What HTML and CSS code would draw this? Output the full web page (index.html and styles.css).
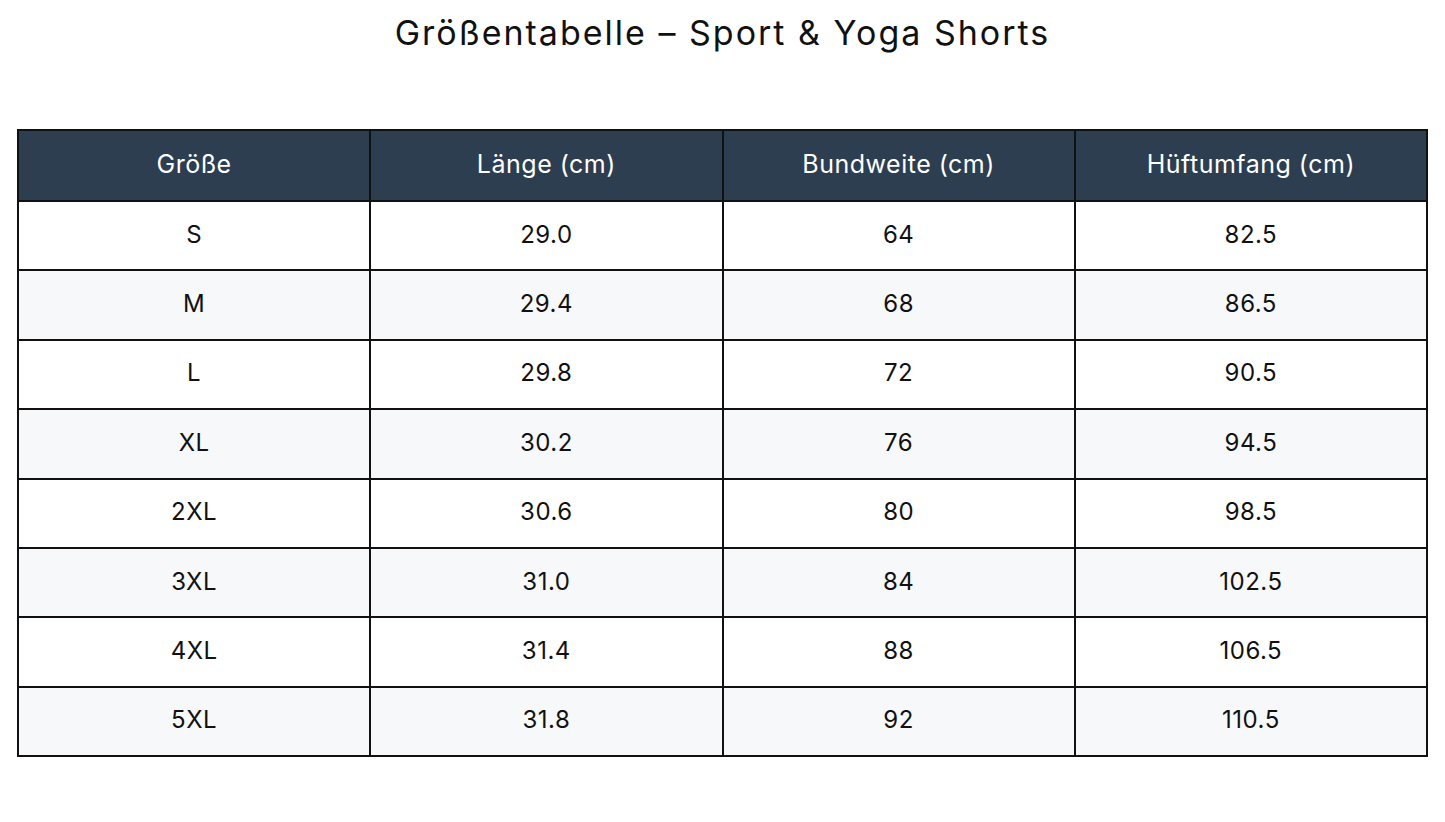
FILE: index.html
```html
<!DOCTYPE html>
<html lang="de">
<head>
<meta charset="utf-8">
<title>Größentabelle – Sport &amp; Yoga Shorts</title>
<link rel="stylesheet" href="styles.css">
</head>
<body>
<main class="page">
  <h1 class="title">Größentabelle – Sport &amp; Yoga Shorts</h1>
  <table class="sizes">
    <thead>
      <tr><th>Größe</th><th>Länge (cm)</th><th>Bundweite (cm)</th><th>Hüftumfang (cm)</th></tr>
    </thead>
    <tbody>
      <tr><td>S</td><td>29.0</td><td>64</td><td>82.5</td></tr>
      <tr><td>M</td><td>29.4</td><td>68</td><td>86.5</td></tr>
      <tr><td>L</td><td>29.8</td><td>72</td><td>90.5</td></tr>
      <tr><td>XL</td><td>30.2</td><td>76</td><td>94.5</td></tr>
      <tr><td>2XL</td><td>30.6</td><td>80</td><td>98.5</td></tr>
      <tr><td>3XL</td><td>31.0</td><td>84</td><td>102.5</td></tr>
      <tr><td>4XL</td><td>31.4</td><td>88</td><td>106.5</td></tr>
      <tr><td>5XL</td><td>31.8</td><td>92</td><td>110.5</td></tr>
    </tbody>
  </table>
</main>
</body>
</html>
```
FILE: styles.css
```css
html, body {
  margin: 0;
  padding: 0;
  background: #ffffff;
}
body {
  font-family: Inter, "Open Sans", "Liberation Sans", sans-serif;
  color: #111111;
}
.page {
  padding: 0 17px;
}
.title {
  margin: 0;
  padding-top: 9px;
  height: 129px;
  box-sizing: border-box;
  text-align: center;
  font-weight: 400;
  font-size: 34px;
  letter-spacing: 2px;
  line-height: 48px;
  color: #111111;
}
.sizes {
  width: 1411px;
  border-collapse: collapse;
  table-layout: fixed;
  border: 2px solid #111111;
}
.sizes th,
.sizes td {
  border: 2px solid #111111;
  text-align: center;
  padding: 0 0 3px;
  font-weight: 400;
  letter-spacing: 0.5px;
}
.sizes th {
  background: #2c3e50;
  color: #ffffff;
  height: 66px;
  font-size: 25px;
}
.sizes td {
  height: 64.4px;
  font-size: 24px;
}
.sizes tbody tr:nth-child(even) td {
  background: #f7f8fa;
}
```
